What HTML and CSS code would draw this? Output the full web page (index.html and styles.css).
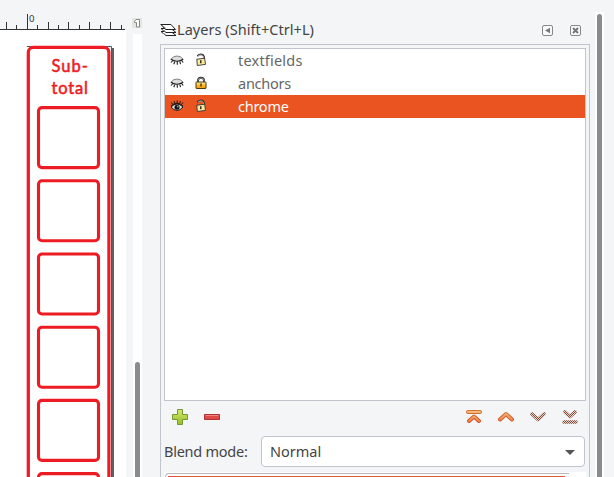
FILE: index.html
```html
<!DOCTYPE html>
<html lang="en">
<head>
<meta charset="utf-8">
<title>Layers</title>
<link rel="stylesheet" href="styles.css">
</head>
<body>
<svg width="0" height="0" class="defs">
  <defs>
    <linearGradient id="gold" x1="0" y1="0" x2="0" y2="1"><stop offset="0" stop-color="#fff0b0"/><stop offset=".5" stop-color="#f9b830"/><stop offset="1" stop-color="#f29a08"/></linearGradient>
    <linearGradient id="green" x1="0" y1="0" x2="0" y2="1"><stop offset="0" stop-color="#d6e86a"/><stop offset="1" stop-color="#96bd28"/></linearGradient>
    <linearGradient id="orange" gradientUnits="userSpaceOnUse" x1="0" y1="0" x2="0" y2="14"><stop offset="0" stop-color="#f8c27c"/><stop offset="1" stop-color="#f07a42"/></linearGradient>
    <linearGradient id="rust" gradientUnits="userSpaceOnUse" x1="0" y1="0" x2="0" y2="14"><stop offset="0" stop-color="#d07b3b"/><stop offset="1" stop-color="#d0421c"/></linearGradient>
    <pattern id="check" width="2" height="2" patternUnits="userSpaceOnUse" shape-rendering="crispEdges"><rect width="2" height="2" fill="#e0d3c8"/><path d="M0 0h1v1H0zM1 1h1v1H1z" fill="#85493a"/></pattern>
    <symbol id="closed" viewBox="0 0 14 12">
      <path d="M1 5.500Q3 2 7 2T13 5.500Q11 7.500 7 7.500Q3 7.500 1 5.500Z" fill="#ddd"/>
      <path d="M1.500 4.500Q3.500 2 7 2T12.500 4.500" fill="none" stroke="#777" stroke-width=".9"/>
      <path d="M.8 5Q3 7.200 7 7.200T13.200 5M2.800 6.500L1 8.500M5 7l-1.200 3.300M7.300 7.200v3.600M9.600 7l1 3.200M11.400 6.200L13.200 8.500" fill="none" stroke="#222" stroke-width="1.100"/>
    </symbol>
    <symbol id="open" viewBox="0 0 14 12">
      <path d="M1 7Q4 4 7 4T13 7Q10 10.500 7 10.500T1 7Z" fill="#ddd" stroke="#111" stroke-width=".9"/>
      <circle cx="7" cy="7.200" r="2.500" fill="#111"/><circle cx="7.700" cy="6.500" r=".9" fill="#80a6a4"/>
      <path d="M1 5.800Q4 3.300 7 3.300T13 5.800M2.800 4.500L1.300 2.400M5 3.800L4 1M7.200 3.500V.5M9.500 3.800l1-2.800M11.400 4.600L13 2.400" fill="none" stroke="#111" stroke-width=".9"/>
    </symbol>
    <symbol id="unlocked" viewBox="0 0 12 14">
      <path d="M2.300 3.200Q4.500 1 7 1.600Q9.300 2.200 9.300 6" fill="none" stroke="#333" stroke-width="1.700"/>
      <path d="M3 3Q5 1.500 7 2.100Q8.700 2.800 8.900 6" fill="none" stroke="#ccc" stroke-width=".7"/>
      <path d="M1.800 6.200L9.600 5.300L10.500 11.400L2.300 12.500Z" fill="#fbeaa0" stroke="#333" stroke-width=".9"/><path d="M5.800 7.300v3" stroke="#111" stroke-width="1.300"/>
    </symbol>
    <symbol id="locked" viewBox="0 0 12 14">
      <path d="M3 7V4.500Q3 1.800 6 1.800T9 4.500V7" fill="none" stroke="#222" stroke-width="1.900"/>
      <path d="M3 6V4.500Q3 2 6 2T9 4.500V6" fill="none" stroke="#bbb" stroke-width=".7"/>
      <rect x="1" y="6" width="10" height="6.500" rx=".5" fill="url(#gold)" stroke="#3a2500" stroke-width=".9"/><path d="M6 7.500v3" stroke="#3a2500" stroke-width="1.300"/>
    </symbol>
  </defs>
</svg>
<main class="app">
  <section class="editor">
    <svg class="ruler" viewBox="0 0 126 30" shape-rendering="crispEdges">
      <path d="M0 29.500H125M27.500 14V29M6.500 22v7M48.500 22v7M68.500 22v7M89.500 22v7M110.500 22v7M16.500 25v4M37.500 25v4M58.500 25v4M79.500 25v4M100.500 25v4M121.500 25v4" stroke="#333" fill="none"/>
      <text x="29" y="22" class="ruler-number">0</text>
    </svg>
    <svg class="canvas" viewBox="0 30 126 447">
      <path d="M111 48h3v429h-3z" fill="#626262"/>
      <path d="M27 46.500h84.500V477" fill="none" stroke="#555"/>
      <rect x="28.300" y="47.400" width="80.600" height="445" rx="5" fill="#fff" stroke="#ed1c24" stroke-width="3.200"/>
      <g fill="#fff" stroke="#ed1c24" stroke-width="3.100">
        <rect x="38.500" y="107.600" width="60" height="60" rx="3.500"/>
        <rect x="38.500" y="180.800" width="60" height="60" rx="3.500"/>
        <rect x="38.500" y="254" width="60" height="60" rx="3.500"/>
        <rect x="38.500" y="327.200" width="60" height="60" rx="3.500"/>
        <rect x="38.500" y="400.400" width="60" height="60" rx="3.500"/>
        <rect x="38.500" y="473.600" width="60" height="60" rx="3.500"/>
      </g>
      <text class="label" x="51.500" y="72" textLength="36.500">Sub-</text>
      <text class="label" x="51.500" y="94" textLength="36.500">total</text>
    </svg>
  </section>
  <aside class="canvas-scroll">
    <svg width="10" height="11" viewBox="0 0 10 11"><rect width="10" height="10" fill="#e4e4e0"/><path d="M2.500 3.500L4 1.500h3.500v7.500h-3V4.500h-2z" fill="#fff" stroke="#888"/></svg>
    <div class="track"><div class="thumb"></div></div>
  </aside>
  <section class="dock">
    <header class="title">
      <svg width="17" height="14" viewBox="0 0 17 14"><g fill="#fff" stroke="#222"><path d="M1 8.500h10l5 4H6z"/><path d="M1 5.500h10l5 4H6z"/><path d="M.8 1.500H11l4.500 5H5.500z"/></g><path d="M2 2.500l4 3M2 6.500l3 2M2 9.500l3 2" stroke="#777"/></svg>
      <h1>Layers (Shift+Ctrl+L)</h1>
      <svg class="dock-button" width="11" height="11" viewBox="0 0 11 11"><rect x=".5" y=".5" width="10" height="10" rx="1.500" fill="#fafafa" stroke="#888"/><path d="M8 2.700v5.600L3 5.500z" fill="#777"/></svg>
      <svg class="dock-button" width="11" height="11" viewBox="0 0 11 11"><rect x=".5" y=".5" width="10" height="10" rx="1.500" fill="#fafafa" stroke="#888"/><path d="M3 3l5 5M8 3L3 8" stroke="#777" stroke-width="2"/></svg>
    </header>
    <div class="panel">
      <ul class="layers">
        <li><svg class="eye"><use href="#closed"/></svg><svg class="lock"><use href="#unlocked"/></svg><span class="w-text">textfields</span></li>
        <li><svg class="eye"><use href="#closed"/></svg><svg class="lock"><use href="#locked"/></svg><span class="w-anchor">anchors</span></li>
        <li class="selected"><svg class="eye"><use href="#open"/></svg><svg class="lock"><use href="#unlocked"/></svg><span class="w-chrome">chrome</span></li>
      </ul>
      <div class="tools">
        <svg width="16" height="16" viewBox="0 0 16 16"><path d="M5.500.5h5v5h5v5h-5v5h-5v-5h-5v-5h5z" fill="url(#green)" stroke="#729b35"/></svg>
        <svg width="16" height="6" viewBox="0 0 16 6"><path d="M.5.5h15v5H.5z" fill="#df4b47" stroke="#b13236"/><path d="M1.500 1.500h13" stroke="#ed8580"/></svg>
        <span class="spacer"></span>
        <svg class="arrow" viewBox="0 0 16 14"><path d="M2 2h12M3 11l5-4.500 5 4.500" class="rim"/><path d="M2 2h12M3 11l5-4.500 5 4.500" class="core"/></svg>
        <svg class="arrow" viewBox="0 0 16 14"><path d="M2 9.500l6-5.500 6 5.500" class="rim"/><path d="M2 9.500l6-5.500 6 5.500" class="core"/></svg>
        <svg class="arrow" viewBox="0 0 16 14"><path d="M2 4l6 5.500L14 4" class="dither"/></svg>
        <svg class="arrow" viewBox="0 0 16 14"><path d="M3 2l5 4.500L13 2M2 12h12" class="dither"/></svg>
      </div>
      <div class="blend"><label>Blend mode:</label><div class="select"><span>Normal</span><svg width="10" height="5" viewBox="0 0 10 5"><path d="M0 0h10L5 5z" fill="#555"/></svg></div></div>
      <div class="opacity"><div class="slider"><div class="fill"></div></div></div>
    </div>
  </section>
  <aside class="dock-scroll"><div class="thumb"></div></aside>
</main>
</body>
</html>
```
FILE: styles.css
```css
* { box-sizing: border-box; }
body { margin: 0; overflow: hidden; background: #f4f5f7; color: #444; font: 14.5px "Noto Sans", sans-serif; }
svg { display: block; flex: none; }
.defs { position: absolute; }
.app { display: flex; height: 477px; }
.editor { width: 126px; flex: none; }
.ruler { width: 126px; height: 30px; }
.ruler-number { font: 9.5px "Noto Sans", sans-serif; fill: #333; }
.canvas { width: 126px; height: 447px; background: #fff; }
.label { font: 400 16.5px Lato, sans-serif; fill: #ed1c24; stroke: #ed1c24; stroke-width: .55; stroke-linejoin: round; }
.canvas-scroll { width: 10px; margin-left: 6px; padding-top: 18px; flex: none; }
.track { width: 9px; height: 443px; margin: 5px 0 0 1px; background: #fff; padding: 328px 2px 0; }
.thumb { width: 5px; height: 120px; border-radius: 3px; background: #8b8b8b; }
.dock { width: 430px; margin-left: 18px; flex: none; }
.title { height: 44px; display: flex; align-items: center; padding: 16px 9px 0 0; }
h1 { font-size: 14.5px; font-weight: 400; margin: 0; flex: 1; letter-spacing: .05px; padding-bottom: 2px; }
.dock-button + .dock-button { margin-left: 17px; }
.panel { height: 440px; border: 1px solid #c0c4cc; padding: 3px; }
.layers { width: 422px; height: 353px; margin: 0; padding: 0; list-style: none; border: 1px solid #c0c4cc; background: #fff; }
.layers li { display: flex; align-items: center; height: 23px; padding-left: 5px; color: #666; }
.layers span { padding-bottom: 2px; }
.layers .selected { background: #e95420; color: #fff; }
.eye { width: 14px; height: 12px; margin-bottom: 1px; }
.lock { width: 12px; height: 14px; margin: 0 31px 1px 11px; }
.w-text { letter-spacing: .2px; }
.w-anchor { letter-spacing: -.25px; }
.w-chrome { letter-spacing: -.25px; }
.tools { height: 35px; display: flex; align-items: center; padding: 0 8px 3px; gap: 16px; }
.spacer { flex: 1; }
.arrow { width: 16px; height: 14px; }
.arrow path { fill: none; stroke-linecap: round; stroke-linejoin: round; }
.rim { stroke: url(#rust); stroke-width: 4; }
.core { stroke: url(#orange); stroke-width: 2; }
.arrow .dither { stroke: url(#check); stroke-width: 3.6; }
.blend { height: 31px; display: flex; align-items: center; }
.blend label { width: 97px; letter-spacing: -.25px; padding-bottom: 2px; }
.select { width: 324px; height: 31px; display: flex; align-items: center; justify-content: space-between; padding: 0 9px 0 8px; border: 1px solid #c0c4cc; border-radius: 4px; background: #fff; }
.select span { padding-bottom: 2px; }
.select svg { margin-top: 1px; }
.opacity { height: 6px; margin-top: 5px; background: #fff; overflow: hidden; }
.slider { width: 404px; height: 20px; margin: 1px 0 0 1px; border: 1px solid #b8b8b8; border-width: 1px 0 0 1px; border-radius: 4px 0 0; padding: 2px 4px 0 2px; }
.fill { height: 10px; background: #dc5a31; }
.dock-scroll { width: 9px; margin: 12px 0 0 5px; padding: 2px 2px 0; background: #fff; }
.dock-scroll .thumb { height: 480px; }
```
